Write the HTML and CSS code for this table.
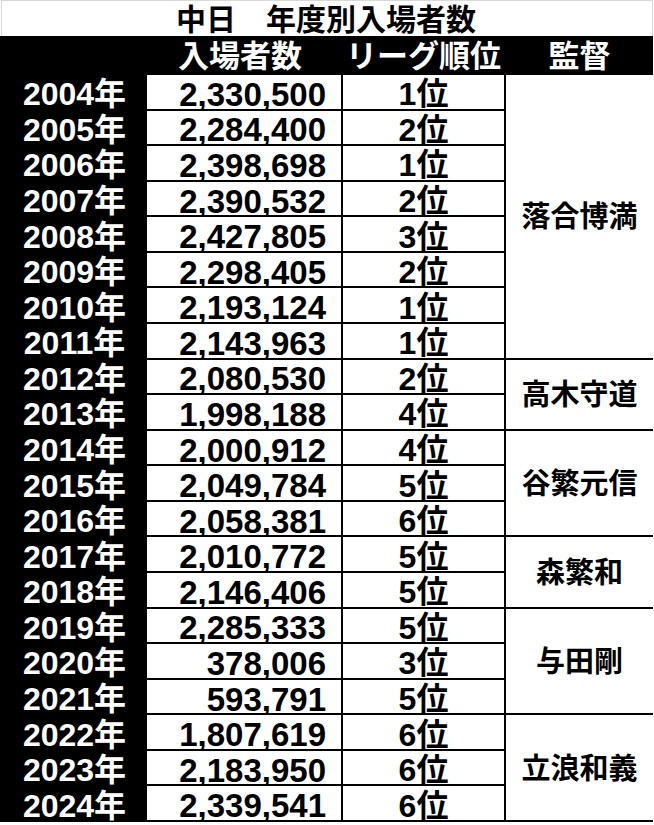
FILE: index.html
```html
<!DOCTYPE html>
<html lang="ja">
<head>
<meta charset="utf-8">
<title>中日 年度別入場者数</title>
<link rel="stylesheet" href="styles.css">
</head>
<body>
<div class="page">
  <div class="title">中日　年度別入場者数</div>
  <div class="sheet">
    <div class="hd"></div>
    <div class="hd">入場者数</div>
    <div class="hd">リーグ順位</div>
    <div class="hd">監督</div>

    <div class="yr r1">2004年</div><div class="num r1">2,330,500</div><div class="rank r1">1位</div>
    <div class="mgr m-ochiai">落合博満</div>
    <div class="yr r2">2005年</div><div class="num r2">2,284,400</div><div class="rank r2">2位</div>
    <div class="yr r3">2006年</div><div class="num r3">2,398,698</div><div class="rank r3">1位</div>
    <div class="yr r4">2007年</div><div class="num r4">2,390,532</div><div class="rank r4">2位</div>
    <div class="yr r5">2008年</div><div class="num r5">2,427,805</div><div class="rank r5">3位</div>
    <div class="yr r6">2009年</div><div class="num r6">2,298,405</div><div class="rank r6">2位</div>
    <div class="yr r7">2010年</div><div class="num r7">2,193,124</div><div class="rank r7">1位</div>
    <div class="yr r8">2011年</div><div class="num r8">2,143,963</div><div class="rank r8">1位</div>

    <div class="mgr m-takagi">高木守道</div>
    <div class="yr r9">2012年</div><div class="num r9">2,080,530</div><div class="rank r9">2位</div>
    <div class="yr r10">2013年</div><div class="num r10">1,998,188</div><div class="rank r10">4位</div>

    <div class="mgr m-tanishige">谷繁元信</div>
    <div class="yr r11">2014年</div><div class="num r11">2,000,912</div><div class="rank r11">4位</div>
    <div class="yr r12">2015年</div><div class="num r12">2,049,784</div><div class="rank r12">5位</div>
    <div class="yr r13">2016年</div><div class="num r13">2,058,381</div><div class="rank r13">6位</div>

    <div class="mgr m-mori">森繁和</div>
    <div class="yr r14">2017年</div><div class="num r14">2,010,772</div><div class="rank r14">5位</div>
    <div class="yr r15">2018年</div><div class="num r15">2,146,406</div><div class="rank r15">5位</div>

    <div class="mgr m-yoda">与田剛</div>
    <div class="yr r16">2019年</div><div class="num r16">2,285,333</div><div class="rank r16">5位</div>
    <div class="yr r17">2020年</div><div class="num r17">378,006</div><div class="rank r17">3位</div>
    <div class="yr r18">2021年</div><div class="num r18">593,791</div><div class="rank r18">5位</div>

    <div class="mgr m-tatsunami">立浪和義</div>
    <div class="yr r19">2022年</div><div class="num r19">1,807,619</div><div class="rank r19">6位</div>
    <div class="yr r20">2023年</div><div class="num r20">2,183,950</div><div class="rank r20">6位</div>
    <div class="yr r21">2024年</div><div class="num r21">2,339,541</div><div class="rank r21">6位</div>
  </div>
</div>
</body>
</html>
```
FILE: styles.css
```css
html, body {
  margin: 0;
  padding: 0;
  background: #fff;
}
.page {
  width: 654px;
  height: 825px;
  background: #fff;
  font-family: "Liberation Sans", "Noto Sans CJK JP", sans-serif;
  font-weight: bold;
  overflow: hidden;
}
.title {
  box-sizing: border-box;
  width: 652px;
  height: 36px;
  margin-left: 1px;
  border: 1px solid #d8d8d8;
  border-bottom: none;
  display: flex;
  align-items: center;
  justify-content: center;
  font-size: 30px;
  line-height: 1;
  color: #000;
  padding-top: 2px;
  padding-right: 2px;
}
.sheet {
  box-sizing: border-box;
  width: 653px;
  height: 786px;
  background: #000;
  padding: 0 2px 2px 0;
  display: grid;
  grid-template-columns: 145px 194px 161px 147px;
  grid-template-rows: 37px repeat(21, minmax(0, 1fr));
  column-gap: 2px;
  row-gap: 2px;
}
.sheet > div {
  display: flex;
  align-items: center;
  line-height: 1;
  min-height: 0;
}
.hd {
  grid-row: 1;
  margin-bottom: -2px;
  justify-content: center;
  color: #fff;
  font-size: 31px;
  padding-top: 2px;
  background: #000;
}
.hd:nth-child(2) { padding-right: 8px; }
.yr {
  grid-column: 1;
  justify-content: center;
  color: #fff;
  font-size: 32px;
  padding: 5px 0 0 4px;
  background: #000;
}
.num {
  grid-column: 2;
  justify-content: flex-end;
  background: #fff;
  color: #000;
  font-size: 33px;
  padding: 5px 15px 0 0;
}
.rank {
  grid-column: 3;
  justify-content: center;
  background: #fff;
  color: #000;
  font-size: 32px;
  padding-top: 5px;
}
.mgr {
  grid-column: 4;
  justify-content: center;
  background: #fff;
  color: #000;
  font-size: 29px;
  padding-top: 3px;
}
.m-ochiai { grid-row: 2 / span 8; }
.m-takagi { grid-row: 10 / span 2; }
.m-tanishige { grid-row: 12 / span 3; }
.m-mori { grid-row: 15 / span 2; }
.m-yoda { grid-row: 17 / span 3; }
.m-tatsunami { grid-row: 20 / span 3; }

.r1 { grid-row: 2; } .r2 { grid-row: 3; } .r3 { grid-row: 4; }
.r4 { grid-row: 5; } .r5 { grid-row: 6; } .r6 { grid-row: 7; }
.r7 { grid-row: 8; } .r8 { grid-row: 9; } .r9 { grid-row: 10; }
.r10 { grid-row: 11; } .r11 { grid-row: 12; } .r12 { grid-row: 13; }
.r13 { grid-row: 14; } .r14 { grid-row: 15; } .r15 { grid-row: 16; }
.r16 { grid-row: 17; } .r17 { grid-row: 18; } .r18 { grid-row: 19; }
.r19 { grid-row: 20; } .r20 { grid-row: 21; } .r21 { grid-row: 22; }
```
